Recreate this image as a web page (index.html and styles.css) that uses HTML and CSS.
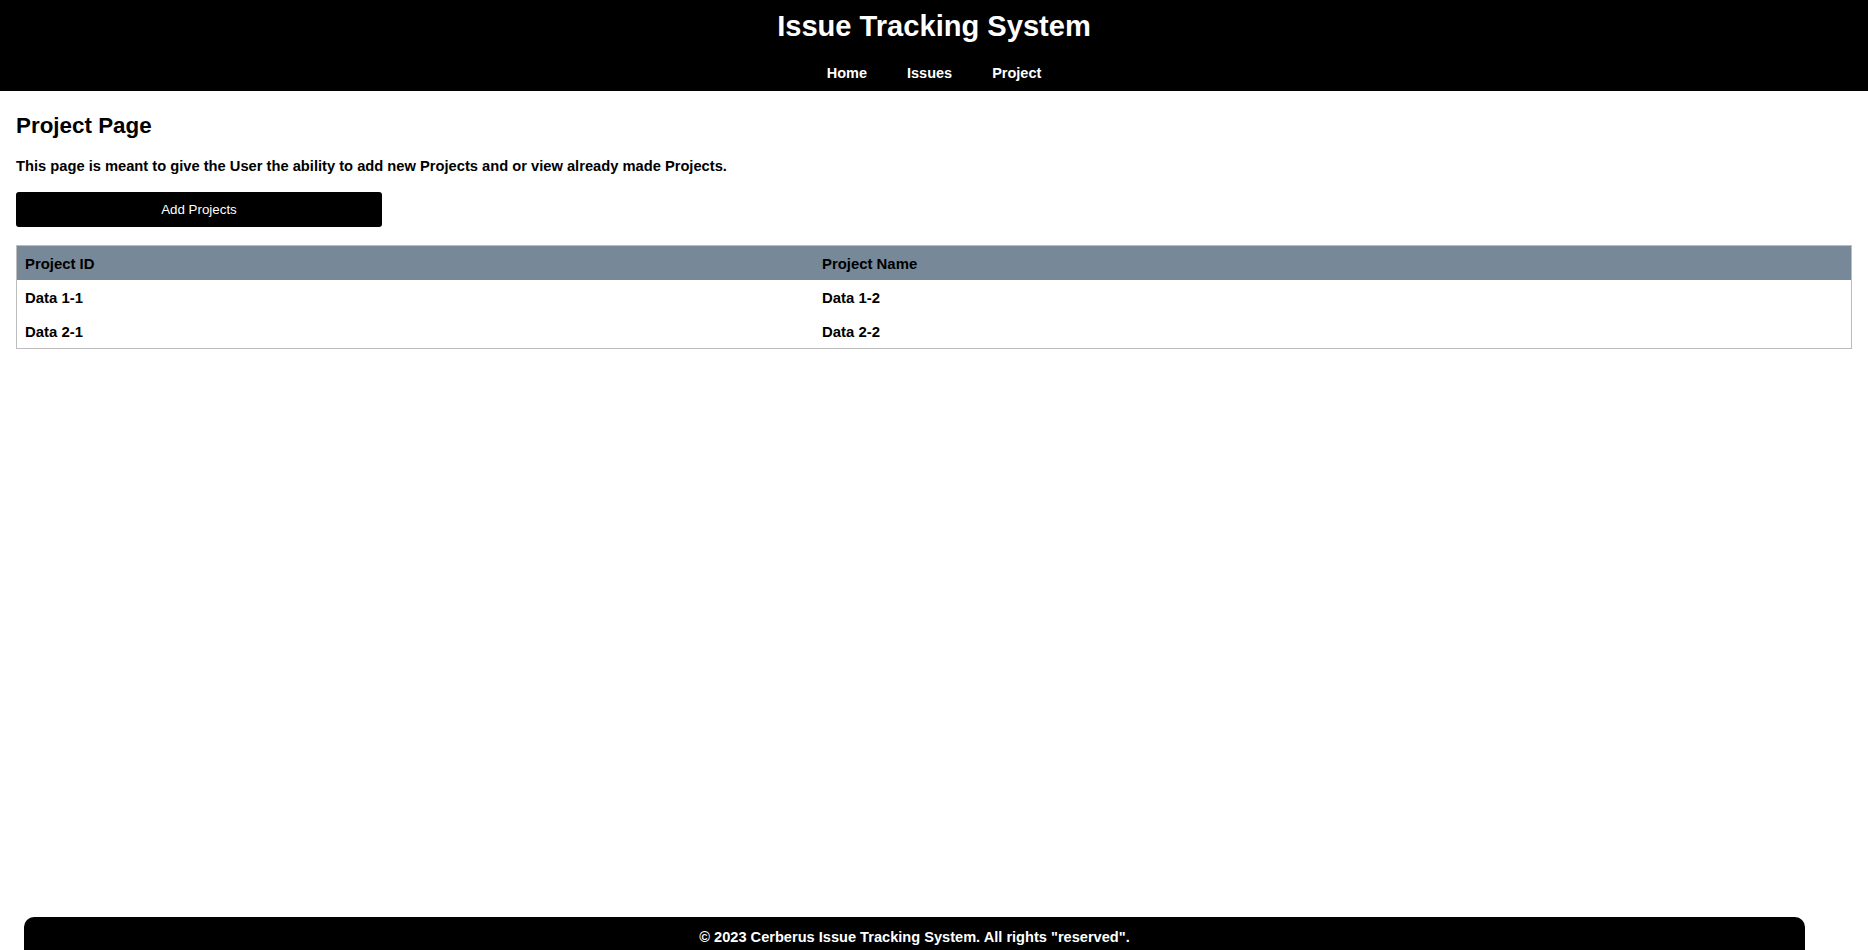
FILE: index.html
```html
<!DOCTYPE html>
<html lang="en">
<head>
<meta charset="utf-8">
<title>Project Page</title>
<link rel="stylesheet" href="styles.css">
</head>
<body>
<div class="page">
  <header class="site-header">
    <h1 class="site-title">Issue Tracking System</h1>
    <nav class="site-nav">
      <a href="#" class="nav-link">Home</a>
      <a href="#" class="nav-link">Issues</a>
      <a href="#" class="nav-link">Project</a>
    </nav>
  </header>
  <main class="content">
    <h2 class="page-title">Project Page</h2>
    <p class="intro">This page is meant to give the User the ability to add new Projects and or view already made Projects.</p>
    <button class="add-btn" type="button">Add Projects</button>
    <table class="projects">
      <thead>
        <tr><th class="col-id">Project ID</th><th>Project Name</th></tr>
      </thead>
      <tbody>
        <tr><td>Data 1-1</td><td>Data 1-2</td></tr>
        <tr><td>Data 2-1</td><td>Data 2-2</td></tr>
      </tbody>
    </table>
  </main>
  <footer class="site-footer">© 2023 Cerberus Issue Tracking System. All rights "reserved".</footer>
</div>
</body>
</html>
```

FILE: styles.css
```css
html, body {
  margin: 0;
  padding: 0;
  background: #fff;
}

body {
  font-family: "Liberation Sans", Arial, sans-serif;
  font-weight: 700;
  font-size: 14.7px;
  color: #000;
}

.page {
  min-height: 100vh;
  display: flex;
  flex-direction: column;
}

.site-header {
  background: #000;
  color: #fff;
  padding: 9px 0 9px;
  display: flex;
  flex-direction: column;
  align-items: center;
}

.site-title {
  margin: 0;
  font-size: 29.1px;
  line-height: 34px;
  font-weight: 700;
}

.site-nav {
  margin-top: 21px;
  display: flex;
  gap: 40px;
}

.nav-link {
  color: #fff;
  text-decoration: none;
  font-size: 14.5px;
  line-height: 18px;
}

.content {
  flex: 1;
  padding: 8px 16px 0;
}

.page-title {
  margin: 14px 0 18px;
  font-size: 22.4px;
  line-height: 26px;
}

.intro {
  margin: 0 0 17px;
  line-height: 18px;
}

.add-btn {
  display: block;
  width: 366px;
  height: 35px;
  background: #000;
  color: #fff;
  border: none;
  border-radius: 3px;
  font-family: "Liberation Sans", Arial, sans-serif;
  font-weight: 400;
  font-size: 13.33px;
  padding: 0;
  margin: 0 0 18px;
}

.projects {
  width: 100%;
  border-collapse: collapse;
  border: 1px solid #bdbdbd;
}

.projects th,
.projects td {
  text-align: left;
  padding: 9px 8px 7px;
  line-height: 18px;
  font-size: 14.9px;
}

.projects thead th {
  background: #778899;
}

.col-id {
  width: 781px;
}

.site-footer {
  height: 48px;
  box-sizing: border-box;
  margin: 0 63px -15px 24px;
  padding-top: 11px;
  background: #000;
  color: #fff;
  border-radius: 10px;
  text-align: center;
  line-height: 18px;
  font-size: 14.6px;
}
```
